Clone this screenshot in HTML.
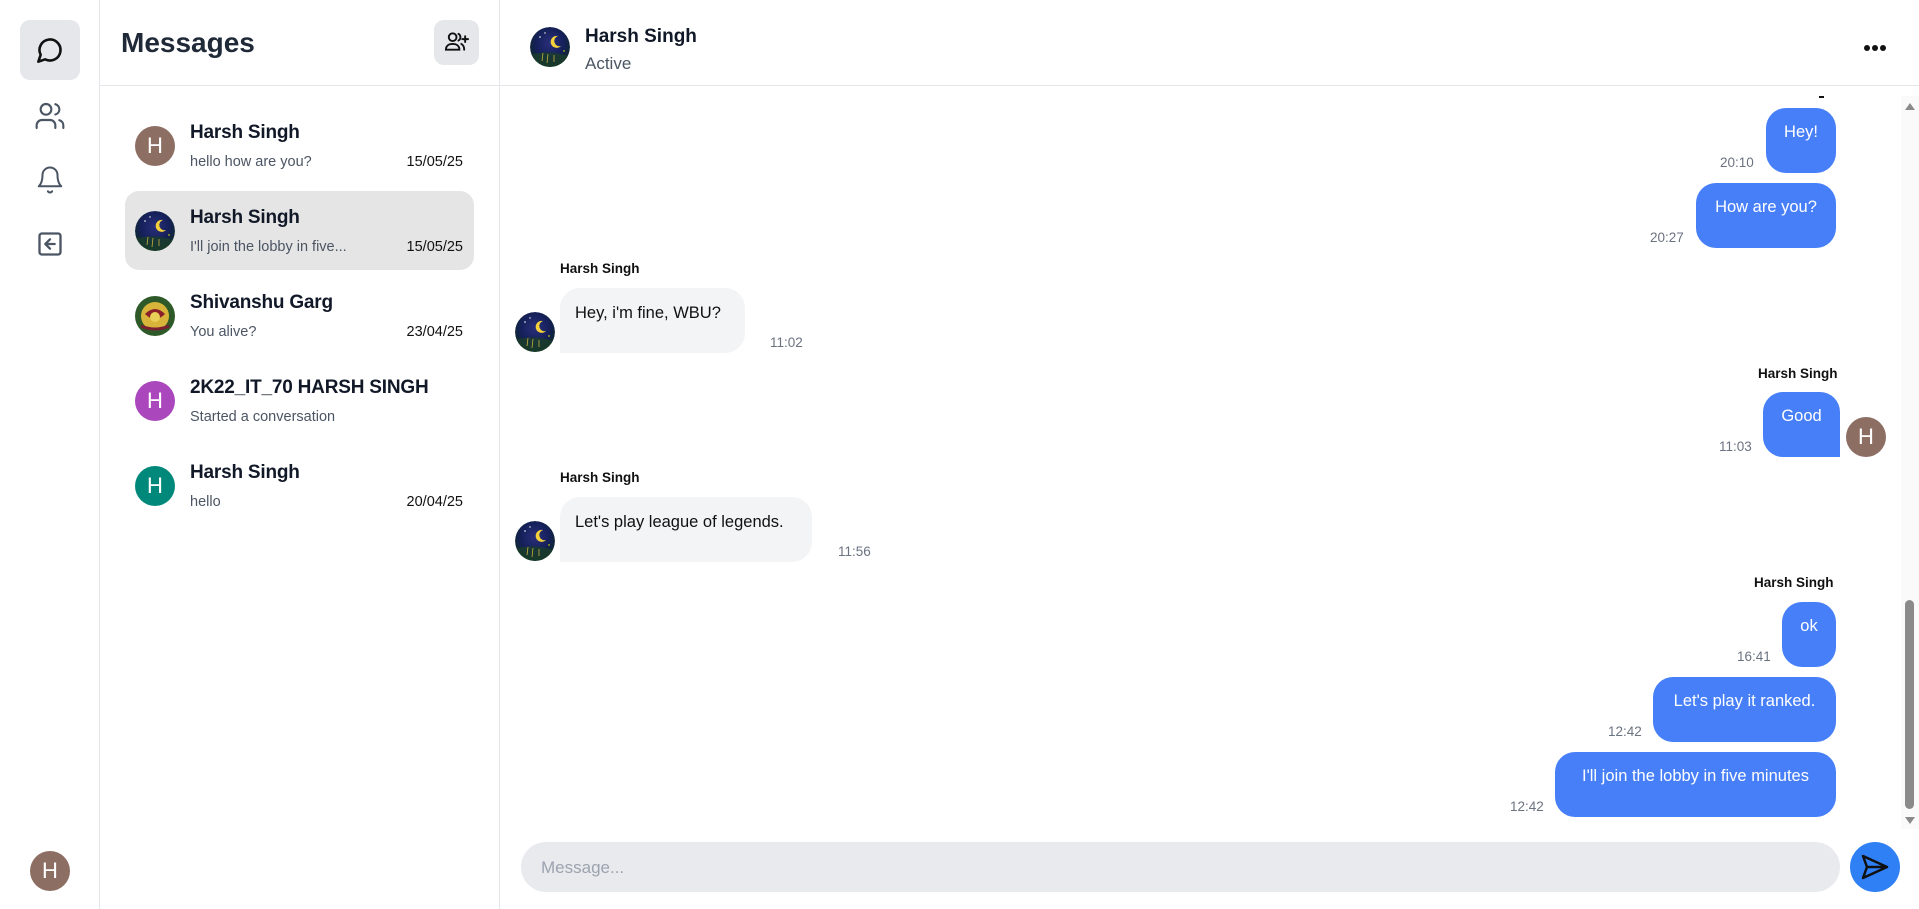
<!DOCTYPE html>
<html><head><meta charset="utf-8"><style>
*{margin:0;padding:0;box-sizing:border-box}
body{width:1919px;height:909px;overflow:hidden;background:#fff;font-family:"Liberation Sans",sans-serif;color:#111;position:relative}
.a{position:absolute}
.av{position:absolute;width:40px;height:40px;border-radius:50%;color:#fff;font-size:22px;display:flex;align-items:center;justify-content:center}
.name{position:absolute;left:190px;font-size:19px;font-weight:bold;color:#111827;letter-spacing:-0.2px}
.prev{position:absolute;left:190px;font-size:14.5px;color:#4b5563}
.date{position:absolute;right:1456px;font-size:14.5px;color:#111}
.bo{position:absolute;background:#467ff8;color:#fff;font-size:16.5px;border-radius:20px;height:65px;padding:15px 16px 0;text-align:center}
.bi{position:absolute;background:#f3f4f6;color:#111;font-size:16.5px;border-radius:20px;border-bottom-left-radius:0;height:65px;padding:16px 15px 0}
.t{position:absolute;font-size:13.5px;color:#6b7280}
.lbl{position:absolute;font-size:13.5px;font-weight:bold;color:#111}
</style></head><body>
<svg width="0" height="0" style="position:absolute"><defs>
<radialGradient id="ng" cx="50%" cy="40%" r="60%"><stop offset="0" stop-color="#2a2f7a"/><stop offset="0.6" stop-color="#15205a"/><stop offset="1" stop-color="#0d2a22"/></radialGradient>
<clipPath id="cc"><circle cx="20" cy="20" r="20"/></clipPath>
<symbol id="night" viewBox="0 0 40 40"><g clip-path="url(#cc)"><circle cx="20" cy="20" r="20" fill="url(#ng)"/><path d="M0 28 Q20 22 40 30 L40 40 L0 40Z" fill="#1a3d2a" opacity=".8"/><path d="M28 9 a6 6 0 1 0 3 10 a5 5 0 1 1 -3 -10z" fill="#f5d23a"/><circle cx="10" cy="10" r=".8" fill="#fff"/><circle cx="15" cy="6" r=".7" fill="#fff"/><circle cx="34" cy="24" r=".7" fill="#ff0"/><path d="M12 34 l1 -8 M17 36 l1 -9 M24 35 l0 -7" stroke="#c8b040" stroke-width=".8"/></g></symbol>
</defs></svg>

<!-- left rail -->
<div class="a" style="left:0;top:0;width:100px;height:909px;border-right:1px solid #e5e7eb"></div>
<div class="a" style="left:20px;top:20px;width:60px;height:60px;border-radius:10px;background:#e5e7eb"></div>
<svg class="a" style="left:36px;top:36px" width="28" height="28" viewBox="0 0 24 24" fill="none" stroke="#111" stroke-width="2.2" stroke-linecap="round" stroke-linejoin="round"><path d="M7.9 20A9 9 0 1 0 4 16.1L2 22Z"/></svg>
<svg class="a" style="left:34px;top:100px" width="32" height="32" viewBox="0 0 24 24" fill="none" stroke="#4b5563" stroke-width="1.6" stroke-linecap="round" stroke-linejoin="round"><path d="M16 21v-2a4 4 0 0 0-4-4H6a4 4 0 0 0-4 4v2"/><circle cx="9" cy="7" r="4"/><path d="M22 21v-2a4 4 0 0 0-3-3.87"/><path d="M16 3.13a4 4 0 0 1 0 7.75"/></svg>
<svg class="a" style="left:35px;top:165px" width="30" height="30" viewBox="0 0 24 24" fill="none" stroke="#4b5563" stroke-width="1.6" stroke-linecap="round" stroke-linejoin="round"><path d="M6 8a6 6 0 0 1 12 0c0 7 3 9 3 9H3s3-2 3-9"/><path d="M10.3 21a1.94 1.94 0 0 0 3.4 0"/></svg>
<svg class="a" style="left:36px;top:230px" width="28" height="28" viewBox="0 0 24 24" fill="none" stroke="#4b5563" stroke-width="2" stroke-linecap="round" stroke-linejoin="round"><rect x="3" y="3" width="18" height="18" rx="2"/><path d="M16 12H8M12 8l-4 4 4 4"/></svg>
<div class="av" style="left:30px;top:851px;background:#8d6e63">H</div>

<!-- messages panel -->
<div class="a" style="left:100px;top:0;width:400px;height:909px;border-right:1px solid #e5e7eb"></div>
<div class="a" style="left:100px;top:85px;width:400px;height:1px;background:#e5e7eb"></div>
<div class="a" style="left:121px;top:27px;font-size:28px;font-weight:bold;color:#1f2937">Messages</div>
<div class="a" style="left:434px;top:20px;width:45px;height:45px;border-radius:10px;background:#e5e7eb"></div>
<svg class="a" style="left:444px;top:31px" width="25" height="22" viewBox="0 0 26 22" fill="none" stroke="#111" stroke-width="2" stroke-linecap="round"><circle cx="9" cy="6" r="4"/><path d="M2 19c0-4 3-6 7-6s7 2 7 6z"/><path d="M15 2.5a4 4 0 0 1 0 7M18 13c2 1 3 3 3 6"/><path d="M22 5v6M19 8h6"/></svg>

<div class="av" style="left:135px;top:126px;background:#8d6e63">H</div>
<div class="name" style="top:122px">Harsh Singh</div>
<div class="prev" style="top:154px">hello how are you?</div>
<div class="date" style="top:154px">15/05/25</div>

<div class="a" style="left:125px;top:191px;width:349px;height:79px;border-radius:14px;background:#e5e5e5"></div>
<svg class="a" style="left:135px;top:211px" width="40" height="40"><use href="#night"/></svg>
<div class="name" style="top:207px">Harsh Singh</div>
<div class="prev" style="top:239px">I'll join the lobby in five...</div>
<div class="date" style="top:239px">15/05/25</div>

<svg class="a" style="left:135px;top:296px" width="40" height="40" viewBox="0 0 40 40"><circle cx="20" cy="20" r="20" fill="#2e5a2a"/><circle cx="20" cy="20" r="14" fill="#d9b43a"/><path d="M10 18 q10 -10 20 0 q-10 10 -20 0z" fill="#8a1f2a"/><circle cx="20" cy="21" r="5" fill="#e8cf58"/><path d="M6 30 q14 6 28 0" stroke="#7a2030" stroke-width="3" fill="none"/></svg>
<div class="name" style="top:292px">Shivanshu Garg</div>
<div class="prev" style="top:324px">You alive?</div>
<div class="date" style="top:324px">23/04/25</div>

<div class="av" style="left:135px;top:381px;background:#ab47bc">H</div>
<div class="name" style="top:377px">2K22_IT_70 HARSH SINGH</div>
<div class="prev" style="top:409px">Started a conversation</div>

<div class="av" style="left:135px;top:466px;background:#00897b">H</div>
<div class="name" style="top:462px">Harsh Singh</div>
<div class="prev" style="top:494px">hello</div>
<div class="date" style="top:494px">20/04/25</div>

<!-- chat header -->
<div class="a" style="left:500px;top:85px;width:1419px;height:1px;background:#e5e7eb"></div>
<svg class="a" style="left:530px;top:27px" width="40" height="40"><use href="#night"/></svg>
<div class="a" style="left:585px;top:26px;font-size:19px;font-weight:bold;color:#111827">Harsh Singh</div>
<div class="a" style="left:585px;top:54px;font-size:17px;color:#4b5563">Active</div>
<div class="a" style="left:1864px;top:45px;width:6px;height:6px;border-radius:50%;background:#111"></div>
<div class="a" style="left:1872px;top:45px;width:6px;height:6px;border-radius:50%;background:#111"></div>
<div class="a" style="left:1880px;top:45px;width:6px;height:6px;border-radius:50%;background:#111"></div>

<!-- scrollbar -->
<div class="a" style="left:1901px;top:96px;width:18px;height:733px;background:#fafafa"></div>
<div class="a" style="left:1905px;top:103px;width:0;height:0;border-left:5px solid transparent;border-right:5px solid transparent;border-bottom:7px solid #8a8a8a"></div>
<div class="a" style="left:1905px;top:817px;width:0;height:0;border-left:5px solid transparent;border-right:5px solid transparent;border-top:7px solid #8a8a8a"></div>
<div class="a" style="left:1905px;top:600px;width:9px;height:209px;border-radius:5px;background:#8a8a8a"></div>
<div class="a" style="left:1819px;top:96px;width:5px;height:2px;background:#111"></div>

<!-- messages -->
<div class="bo" style="left:1766px;top:108px;width:70px">Hey!</div>
<div class="t" style="left:1720px;top:155px">20:10</div>
<div class="bo" style="left:1696px;top:183px;width:140px">How are you?</div>
<div class="t" style="left:1650px;top:230px">20:27</div>

<div class="lbl" style="left:560px;top:261px">Harsh Singh</div>
<svg class="a" style="left:515px;top:312px" width="40" height="40"><use href="#night"/></svg>
<div class="bi" style="left:560px;top:288px;width:185px">Hey, i'm fine, WBU?</div>
<div class="t" style="left:770px;top:335px">11:02</div>

<div class="lbl" style="left:1758px;top:366px">Harsh Singh</div>
<div class="bo" style="left:1763px;top:392px;width:77px;border-bottom-right-radius:0">Good</div>
<div class="av" style="left:1846px;top:417px;background:#8d6e63">H</div>
<div class="t" style="left:1719px;top:439px">11:03</div>

<div class="lbl" style="left:560px;top:470px">Harsh Singh</div>
<svg class="a" style="left:515px;top:521px" width="40" height="40"><use href="#night"/></svg>
<div class="bi" style="left:560px;top:497px;width:252px">Let's play league of legends.</div>
<div class="t" style="left:838px;top:544px">11:56</div>

<div class="lbl" style="left:1754px;top:575px">Harsh Singh</div>
<div class="bo" style="left:1782px;top:602px;width:54px">ok</div>
<div class="t" style="left:1737px;top:649px">16:41</div>
<div class="bo" style="left:1653px;top:677px;width:183px">Let's play it ranked.</div>
<div class="t" style="left:1608px;top:724px">12:42</div>
<div class="bo" style="left:1555px;top:752px;width:281px">I'll join the lobby in five minutes</div>
<div class="t" style="left:1510px;top:799px">12:42</div>

<!-- input -->
<div class="a" style="left:521px;top:842px;width:1319px;height:50px;border-radius:25px;background:#e9eaee"></div>
<div class="a" style="left:541px;top:858px;font-size:17px;color:#9ca3af">Message...</div>
<div class="a" style="left:1850px;top:842px;width:50px;height:50px;border-radius:50%;background:#2f80f5"></div>
<svg class="a" style="left:1861px;top:854px" width="28" height="26" viewBox="0 0 28 26" fill="none" stroke="#111" stroke-width="2.5" stroke-linejoin="round"><path d="M2 2 L26 13 L2 24 L6 13 Z M6 13 H26"/></svg>
</body></html>
